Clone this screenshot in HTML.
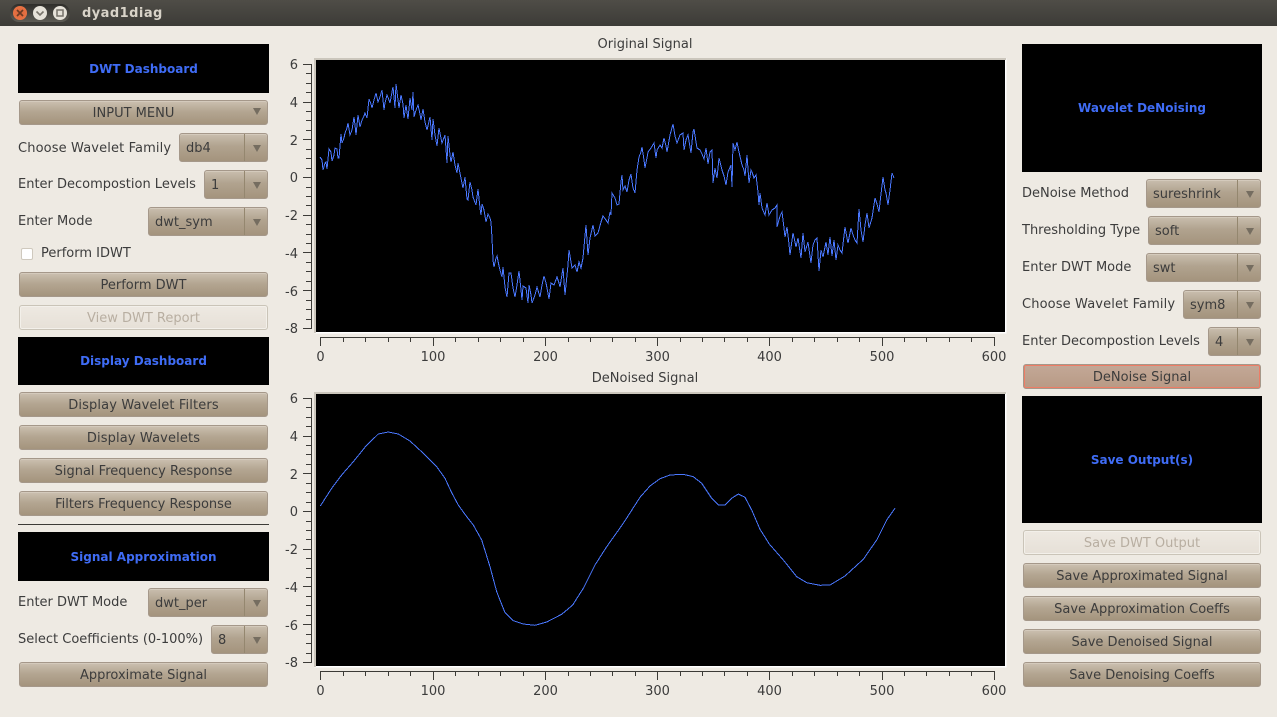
<!DOCTYPE html>
<html><head><meta charset="utf-8"><title>dyad1diag</title>
<style>
html,body{margin:0;padding:0;width:1277px;height:717px;overflow:hidden;background:#eeeae3}
body{position:relative;font:13px/1 "DejaVu Sans","Liberation Sans",sans-serif;color:#3c3c3c}
.t,.bk,.b,.c,.l{position:absolute;box-sizing:border-box;white-space:nowrap}
.bk{background:#000;color:#3f6cf5;font-weight:bold;font-size:12px;display:flex;align-items:center;justify-content:center}
.b{height:25px;border:1px solid #a5988a;border-radius:3px;background:linear-gradient(#cbc0b0,#b4a692 45%,#a4947d);display:flex;align-items:center;justify-content:center;padding-top:2px;box-shadow:inset 0 1px 0 #d4cabc}
.b.m{padding-right:20px}
.b.d{background:linear-gradient(#eee9e2,#e6e0d7);border-color:#cac4b8;color:#b8aea1;box-shadow:inset 0 0 0 1px #f3f0ea}
.c{height:29px;border:1px solid #a5988a;border-radius:3px;background:linear-gradient(#c9beae,#b1a38f 45%,#a4947d);display:flex;align-items:center;padding-left:6px;padding-top:2px;box-shadow:inset 0 1px 0 #d4cabc}
.c i{position:absolute;right:22px;top:0;bottom:0;width:1px;background:#94876f}
.c u,.b u{position:absolute;right:6px;top:11px;width:0;height:0;border-left:4px solid transparent;border-right:4px solid transparent;border-top:7px solid #756d60;text-decoration:none}
.b u{top:7px}
.l{height:16px;line-height:16px}
.s{letter-spacing:.13px}
svg{position:absolute;left:0;top:0}
svg text{font:13px "DejaVu Sans","Liberation Sans",sans-serif;fill:#3c3c3c}
</style></head>
<body>
<div style="position:absolute;left:0;top:0;width:1277px;height:26px;background:linear-gradient(#4f4d47,#3c3b37)"></div>
<div style="position:absolute;left:10px;top:4px;width:60px;height:18px;border-radius:9px;background:linear-gradient(#2f2e2b,#5d5b54)"></div>
<div style="position:absolute;left:13px;top:6px;width:14px;height:14px;border-radius:7px;background:radial-gradient(#d9663c,#f07746)"></div>
<div style="position:absolute;left:33px;top:6px;width:14px;height:14px;border-radius:7px;background:#e6e2d9"></div>
<div style="position:absolute;left:53px;top:6px;width:14px;height:14px;border-radius:7px;background:#e6e2d9"></div>
<svg width="90" height="26" style="z-index:2"><path d="M17 10l6 6M23 10l-6 6" stroke="#6b3a24" stroke-width="1.6" fill="none"/><path d="M36.500 11.500l3.500 3.500 3.500-3.500" stroke="#77736a" stroke-width="1.6" fill="none"/><rect x="57" y="10" width="6" height="6" stroke="#77736a" stroke-width="1.500" fill="none"/></svg>
<div class="t" style="left:82px;top:6px;font-weight:bold;font-size:13px;line-height:16px;color:#d8d3c8;letter-spacing:.45px">dyad1diag</div>

<div class="bk" style="left:18px;top:44px;width:251px;height:49px">DWT Dashboard</div>
<div class="b m" style="left:19px;top:100px;width:249px">INPUT MENU<u></u></div>
<div class="l s" style="left:18px;top:141px">Choose Wavelet Family</div>
<div class="c" style="left:179px;top:133px;width:89px">db4<i></i><u></u></div>
<div class="l" style="left:18px;top:177px">Enter Decompostion Levels</div>
<div class="c" style="left:204px;top:170px;width:64px">1<i></i><u></u></div>
<div class="l" style="left:18px;top:214px">Enter Mode</div>
<div class="c" style="left:148px;top:207px;width:120px">dwt_sym<i></i><u></u></div>
<div style="position:absolute;box-sizing:border-box;left:21px;top:248px;width:12px;height:12px;background:#fff;border:1px solid #cfc9be;border-radius:2px"></div>
<div class="l" style="left:41px;top:246px">Perform IDWT</div>
<div class="b" style="left:19px;top:272px;width:249px">Perform DWT</div>
<div class="b d" style="left:19px;top:305px;width:249px">View DWT Report</div>
<div class="bk" style="left:18px;top:337px;width:251px;height:48px">Display Dashboard</div>
<div class="b s" style="left:19px;top:392px;width:249px">Display Wavelet Filters</div>
<div class="b s" style="left:19px;top:425px;width:249px">Display Wavelets</div>
<div class="b" style="left:19px;top:458px;width:249px">Signal Frequency Response</div>
<div class="b" style="left:19px;top:491px;width:249px">Filters Frequency Response</div>
<div style="position:absolute;left:18px;top:524px;width:251px;height:1px;background:#3c3b37"></div>
<div class="bk" style="left:18px;top:532px;width:251px;height:49px">Signal Approximation</div>
<div class="l" style="left:18px;top:595px">Enter DWT Mode</div>
<div class="c" style="left:148px;top:588px;width:120px">dwt_per<i></i><u></u></div>
<div class="l" style="left:18px;top:632px">Select Coefficients (0-100%)</div>
<div class="c" style="left:211px;top:625px;width:57px">8<i></i><u></u></div>
<div class="b" style="left:19px;top:662px;width:249px">Approximate Signal</div>

<div class="bk" style="left:1022px;top:44px;width:240px;height:128px">Wavelet DeNoising</div>
<div class="l" style="left:1022px;top:186px">DeNoise Method</div>
<div class="c" style="left:1146px;top:179px;width:115px">sureshrink<i></i><u></u></div>
<div class="l" style="left:1022px;top:223px">Thresholding Type</div>
<div class="c" style="left:1148px;top:216px;width:113px">soft<i></i><u></u></div>
<div class="l" style="left:1022px;top:260px">Enter DWT Mode</div>
<div class="c" style="left:1146px;top:253px;width:115px">swt<i></i><u></u></div>
<div class="l s" style="left:1022px;top:297px">Choose Wavelet Family</div>
<div class="c" style="left:1183px;top:290px;width:78px">sym8<i></i><u></u></div>
<div class="l" style="left:1022px;top:334px">Enter Decompostion Levels</div>
<div class="c" style="left:1208px;top:327px;width:53px">4<i></i><u></u></div>
<div class="b" style="left:1023px;top:364px;width:238px;background:linear-gradient(#c3a897,#b89a85);box-shadow:inset 0 0 0 1px #ee7d66">DeNoise Signal</div>
<div class="bk" style="left:1022px;top:396px;width:240px;height:127px">Save Output(s)</div>
<div class="b d" style="left:1023px;top:530px;width:238px">Save DWT Output</div>
<div class="b" style="left:1023px;top:563px;width:238px">Save Approximated Signal</div>
<div class="b" style="left:1023px;top:596px;width:238px">Save Approximation Coeffs</div>
<div class="b" style="left:1023px;top:629px;width:238px">Save Denoised Signal</div>
<div class="b" style="left:1023px;top:662px;width:238px">Save Denoising Coeffs</div>

<svg width="1277" height="717">
<defs>
<g id="ax">
<rect x="314.500" y="58.500" width="692" height="275" fill="#fff"/>
<path d="M314 58h692v2H316v273h-2z" fill="#cbc6bc"/>
<rect x="316" y="60" width="689" height="272" fill="#000"/>
<path shape-rendering="crispEdges" fill="none" stroke="#3c3b37" stroke-width="1" d="M311.500 64V328M303 64.500h9M303 102.500h9M303 139.500h9M303 177.500h9M303 215.500h9M303 252.500h9M303 290.500h9M303 328.500h9M306 73.500h6M306 83.500h6M306 92.500h6M306 111.500h6M306 120.500h6M306 130.500h6M306 149.500h6M306 158.500h6M306 168.500h6M306 187.500h6M306 196.500h6M306 205.500h6M306 224.500h6M306 234.500h6M306 243.500h6M306 262.500h6M306 271.500h6M306 281.500h6M306 300.500h6M306 309.500h6M306 319.500h6M320 337.500H995M320.500 337v9M433.500 337v9M545.500 337v9M657.500 337v9M769.500 337v9M882.500 337v9M994.500 337v9M343.500 337v5M365.500 337v5M388.500 337v5M410.500 337v5M455.500 337v5M478.500 337v5M500.500 337v5M523.500 337v5M568.500 337v5M590.500 337v5M612.500 337v5M635.500 337v5M680.500 337v5M702.500 337v5M724.500 337v5M747.500 337v5M792.500 337v5M814.500 337v5M837.500 337v5M859.500 337v5M904.500 337v5M926.500 337v5M949.500 337v5M971.500 337v5"/>
</g>
</defs>
<use href="#ax"/>
<use href="#ax" y="334"/>

<polyline shape-rendering="crispEdges" fill="none" stroke="#4a78ff" stroke-width="1" points="320,157 322,160 323,170 325,163 326,162 327,169 329,149 331,152 332,161 334,155 335,148 337,149 338,158 339,158 341,134 342,143 344,138 345,133 347,128 348,123 350,135 352,130 354,117 355,125 356,135 358,115 360,127 362,120 364,116 365,113 367,118 369,99 371,104 372,108 374,100 376,93 378,102 380,97 382,90 384,110 385,103 387,95 389,100 390,103 392,92 393,87 395,108 396,84 398,100 399,108 401,95 403,104 404,118 406,105 408,119 410,98 412,110 413,92 414,117 416,110 418,105 420,114 421,120 423,109 425,122 427,130 430,117 432,140 433,119 435,135 437,146 439,128 441,138 442,143 445,135 447,163 448,136 450,155 451,162 453,152 455,165 457,173 458,163 461,178 463,188 465,177 467,199 468,200 470,182 472,190 473,197 476,205 478,189 480,208 481,215 482,204 484,210 486,222 488,214 490,218 491,222 492,238 493,260 494,267 496,258 497,256 499,266 500,270 502,277 503,267 505,287 507,297 509,273 511,273 513,288 515,297 517,285 519,271 521,290 522,300 523,286 526,288 528,303 529,285 531,295 532,303 535,295 537,287 540,297 542,285 544,276 546,283 547,288 549,299 551,283 554,285 557,277 559,283 560,287 563,268 565,295 568,265 569,250 571,262 572,268 575,265 577,272 579,262 581,268 583,258 586,225 588,255 590,238 593,225 595,236 598,233 601,222 603,216 606,220 608,223 610,212 611,215 612,193 615,198 617,205 619,204 621,182 622,175 623,190 625,186 627,192 629,180 631,174 633,188 635,193 637,170 639,157 641,152 642,147 644,160 645,168 647,158 648,152 651,148 654,143 656,158 657,150 660,145 662,148 664,138 666,146 667,152 670,135 673,124 675,136 677,143 680,135 683,133 684,150 686,140 688,135 691,153 693,132 694,129 696,142 697,148 700,150 702,154 704,159 706,148 708,164 710,152 712,150 713,183 715,168 717,178 719,158 722,170 724,176 726,185 728,172 731,165 732,187 733,143 735,150 737,142 739,152 742,165 744,170 745,176 747,155 749,183 751,170 752,172 754,178 756,175 758,192 759,205 760,193 762,208 765,215 767,203 769,215 772,210 775,208 777,205 777,227 780,216 782,212 784,228 785,237 787,227 789,244 790,255 793,233 795,242 796,247 798,238 801,258 803,233 805,252 808,242 811,263 813,245 815,240 817,238 819,271 821,250 823,257 826,242 828,255 830,237 832,256 834,240 836,260 838,245 840,250 842,253 845,227 847,238 848,243 851,228 853,235 855,240 857,243 859,209 861,230 863,242 865,225 867,213 869,228 872,218 875,198 877,204 879,212 881,194 883,177 885,190 886,193 888,205 890,190 892,173 894,178"/>

<polyline shape-rendering="crispEdges" fill="none" stroke="#4a78ff" stroke-width="1" points="320.300,506 331.700,488.300 341.700,475 353.300,461.700 366,446 378.300,434 388.300,432 398.300,434 410,441 423.300,453.300 436.700,466.700 445,478.300 451.700,492.700 458.300,505 466.700,516.700 473.300,525 481.700,540 490,566.700 496.700,591.700 505,612.700 513.300,620.700 523.300,624 535,625.300 546.700,622 561.700,614.300 572.700,605 583.300,588.300 595,565 606.700,546.700 623.300,523.300 640,497.300 650,486 660,478.700 670,475 683.300,474.300 693.300,476.700 701.700,483.300 711.700,498.300 718.300,505 725,505 731.700,498.300 738.300,494 745,497.300 751.700,510 760,529.300 769.300,544 783.300,560 796.700,576.700 806.700,582.700 820,585.300 830,585 845,576 863.300,559.300 876.700,540 886.700,520 895,508.300"/>

<g text-anchor="middle">
<text x="645" y="48">Original Signal</text>
<text x="645" y="382">DeNoised Signal</text>
<text x="320.500" y="361">0</text><text x="433" y="361">100</text><text x="545.500" y="361">200</text><text x="657.500" y="361">300</text><text x="769.500" y="361">400</text><text x="882" y="361">500</text><text x="994" y="361">600</text>
<text x="320.500" y="695">0</text><text x="433" y="695">100</text><text x="545.500" y="695">200</text><text x="657.500" y="695">300</text><text x="769.500" y="695">400</text><text x="882" y="695">500</text><text x="994" y="695">600</text>
</g>
<g text-anchor="end">
<text x="298" y="69">6</text><text x="298" y="107">4</text><text x="298" y="145">2</text><text x="298" y="182">0</text><text x="298" y="220">-2</text><text x="298" y="258">-4</text><text x="298" y="296">-6</text><text x="298" y="333">-8</text>
<text x="298" y="403">6</text><text x="298" y="441">4</text><text x="298" y="479">2</text><text x="298" y="516">0</text><text x="298" y="554">-2</text><text x="298" y="592">-4</text><text x="298" y="630">-6</text><text x="298" y="667">-8</text>
</g>
</svg>
</body></html>
